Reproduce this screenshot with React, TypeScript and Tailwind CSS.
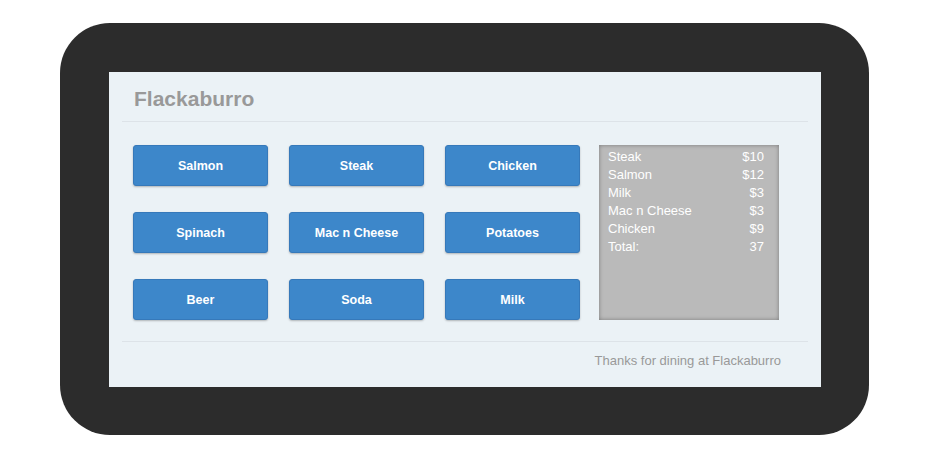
const MENU = ['Salmon', 'Steak', 'Chicken', 'Spinach', 'Mac n Cheese', 'Potatoes', 'Beer', 'Soda', 'Milk']

const ORDER = [
  { name: 'Steak', price: '$10' },
  { name: 'Salmon', price: '$12' },
  { name: 'Milk', price: '$3' },
  { name: 'Mac n Cheese', price: '$3' },
  { name: 'Chicken', price: '$9' },
  { name: 'Total:', price: '37' }
]

function MenuButton({ label }: { label: string }) {
  return (
    <button
      className="h-[41px] w-[135px] rounded-[3px] border border-[#3679ba] bg-[#3d87ca] pt-[1px] text-[12.5px] font-bold text-white shadow-[0_1px_2px_rgba(0,0,0,0.25)]"
      type="button"
    >
      {label}
    </button>
  )
}

function Receipt() {
  return (
    <div className="h-[175px] w-[180px] bg-[#bababa] pt-[3px] pr-[15px] pl-[9px] text-[13px] leading-[18px] text-white shadow-[inset_0_0_4px_rgba(0,0,0,0.35)]">
      {ORDER.map((line) => (
        <div className="flex justify-between" key={line.name}>
          <span>{line.name}</span>
          <span>{line.price}</span>
        </div>
      ))}
    </div>
  )
}

export default function App() {
  return (
    <div className="h-[466px] w-[950px] bg-white pt-[23px] pl-[60px] font-['Liberation_Sans',Arial,sans-serif]">
      <div className="h-[412px] w-[809px] rounded-[50px] bg-[#2c2c2c] pt-[49px] pl-[49px]">
        <div className="h-[315px] w-[712px] bg-[#ebf2f6] px-[13px]">
          <div className="flex h-[50px] items-center border-b border-[#dde3e8] pt-[4px] pl-[12px]">
            <h1 className="text-[21px] leading-none font-bold text-[#999999]">Flackaburro</h1>
          </div>

          <div className="flex pt-[23px] pb-[21px] pl-[11px]">
            <div className="grid grid-cols-[135px_135px_135px] gap-x-[21px] gap-y-[26px]">
              {MENU.map((item) => (
                <MenuButton key={item} label={item} />
              ))}
            </div>
            <div className="ml-[19px]">
              <Receipt />
            </div>
          </div>

          <div className="border-t border-[#dde3e8] pt-[11px] pr-[27px] text-right text-[13px] leading-[16px] text-[#999999]">
            Thanks for dining at Flackaburro
          </div>
        </div>
      </div>
    </div>
  )
}
